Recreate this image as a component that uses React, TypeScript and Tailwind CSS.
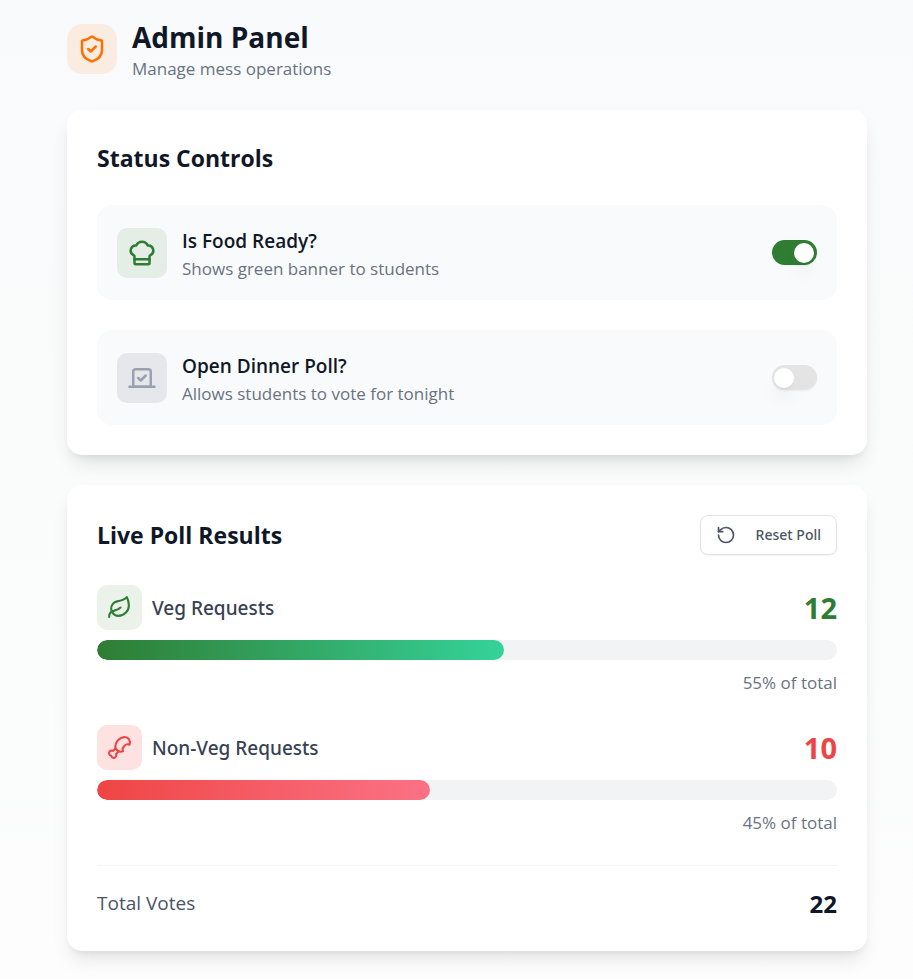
import { useState } from "react";
import { ChefHat, Drumstick, Leaf, RotateCcw, ShieldCheck, Vote } from "lucide-react";

const CARD = "rounded-[15px] bg-white p-[30px] shadow-[0_12px_19px_-4px_rgba(0,0,0,0.1),0_5px_8px_-5px_rgba(0,0,0,0.1)]";

function StatusRow({ id, icon, title, text, checked, onChange }: any) {
  return (
    <div className="flex items-center justify-between rounded-[15px] bg-[#f9fafc] p-5">
      <div className="flex items-center gap-[15px]">
        <div className={`flex size-[50px] items-center justify-center rounded-[10px] ${checked ? "bg-[#e4eee6] text-[#2e7d32]" : "bg-gray-200 text-gray-400"}`}>
          {icon}
        </div>
        <div>
          <label htmlFor={id} className="block text-[19px] leading-8 font-semibold text-gray-900">{title}</label>
          <p className="text-[17px] leading-[23px] text-gray-500">{text}</p>
        </div>
      </div>
      <input
        id={id}
        type="checkbox"
        role="switch"
        checked={checked}
        onChange={(e) => onChange(e.target.checked)}
        className="flex h-[25px] w-[45px] cursor-pointer appearance-none items-center rounded-full bg-[#e4e4e4] p-[2px] shadow-xs before:size-5 before:rounded-full before:bg-white before:shadow-[0_12px_19px_-4px_rgba(0,0,0,0.1),0_5px_8px_-5px_rgba(0,0,0,0.1)] before:transition-transform checked:bg-[#2e7d32] checked:before:translate-x-5"
      />
    </div>
  );
}

function PollBar({ icon, iconClass, label, count, countClass, percent, barClass }: any) {
  return (
    <div>
      <div className="flex items-center justify-between">
        <div className="flex items-center gap-[10px]">
          <div className={`flex size-[45px] items-center justify-center rounded-[10px] ${iconClass}`}>{icon}</div>
          <span className="font-['Noto_Sans',sans-serif] text-[19px] leading-7 font-medium text-gray-700">{label}</span>
        </div>
        <span className={`text-[29px] leading-9 font-bold ${countClass}`}>{count}</span>
      </div>
      <div className="mt-[10px] h-5 overflow-hidden rounded-full bg-[#f2f3f5]">
        <div className={`h-full rounded-full bg-linear-to-r ${barClass}`} style={{ width: `${percent}%` }} />
      </div>
      <p className="mt-[10px] text-right text-[17px] leading-[25px] text-gray-500">{percent}% of total</p>
    </div>
  );
}

export default function App() {
  const [foodReady, setFoodReady] = useState(true);
  const [pollOpen, setPollOpen] = useState(false);
  const [votes, setVotes] = useState({ veg: 12, nonVeg: 10 });

  const total = votes.veg + votes.nonVeg;
  const share = (n: number) => (total ? Math.round((n / total) * 100) : 0);

  return (
    <div className="min-h-screen bg-linear-to-b from-[#f8fafc] via-[#fafcfb] to-[#fdfdfd] pt-[17px] pr-[46px] pb-7 pl-[67px] font-['Open_Sans','Noto_Sans',sans-serif]">
      <header className="flex items-center gap-[15px]">
        <div className="flex size-[50px] items-center justify-center rounded-[15px] bg-[#fbece2] text-[#ff6f00]">
          <ShieldCheck size={30} />
        </div>
        <div>
          <h1 className="text-[28px] leading-10 font-bold text-gray-900">Admin Panel</h1>
          <p className="text-[17px] leading-6 text-gray-500">Manage mess operations</p>
        </div>
      </header>

      <main className="mt-[29px] flex flex-col gap-[30px]">
        <section className={CARD}>
          <h2 className="text-[23px] leading-[37px] font-bold text-gray-900">Status Controls</h2>
          <div className="mt-7 flex flex-col gap-[30px]">
            <StatusRow
              id="food-ready"
              icon={<ChefHat size={30} />}
              title="Is Food Ready?"
              text="Shows green banner to students"
              checked={foodReady}
              onChange={setFoodReady}
            />
            <StatusRow
              id="poll-open"
              icon={<Vote size={30} />}
              title="Open Dinner Poll?"
              text="Allows students to vote for tonight"
              checked={pollOpen}
              onChange={setPollOpen}
            />
          </div>
        </section>

        <section className={CARD}>
          <div className="flex items-center justify-between">
            <h2 className="text-[23px] leading-[37px] font-bold text-gray-900">Live Poll Results</h2>
            <button
              type="button"
              onClick={() => setVotes({ veg: 0, nonVeg: 0 })}
              className="flex h-10 cursor-pointer items-center gap-5 rounded-lg border border-[#e2e3e6] bg-white px-[15px] font-['Noto_Sans',sans-serif] text-sm font-medium text-gray-600 shadow-xs"
            >
              <RotateCcw size={20} />
              Reset Poll
            </button>
          </div>

          <div className="mt-[30px] flex flex-col gap-[30px]">
            <PollBar
              icon={<Leaf size={25} />}
              iconClass="bg-[#eaf2ea] text-[#2e7d32]"
              label="Veg Requests"
              count={votes.veg}
              countClass="text-[#2e7d32]"
              percent={share(votes.veg)}
              barClass="from-[#2e7d32] to-[#34d399]"
            />
            <PollBar
              icon={<Drumstick size={25} />}
              iconClass="bg-[#fee2e2] text-[#ef4444]"
              label="Non-Veg Requests"
              count={votes.nonVeg}
              countClass="text-[#ef4444]"
              percent={share(votes.nonVeg)}
              barClass="from-[#ef4444] to-[#fb7185]"
            />
          </div>

          <div className="mt-[30px] flex items-center justify-between border-t border-gray-100 pt-5">
            <span className="text-[19px] leading-[35px] text-gray-600">Total Votes</span>
            <span className="text-2xl leading-[35px] font-bold text-gray-900">{total}</span>
          </div>
        </section>
      </main>
    </div>
  );
}
